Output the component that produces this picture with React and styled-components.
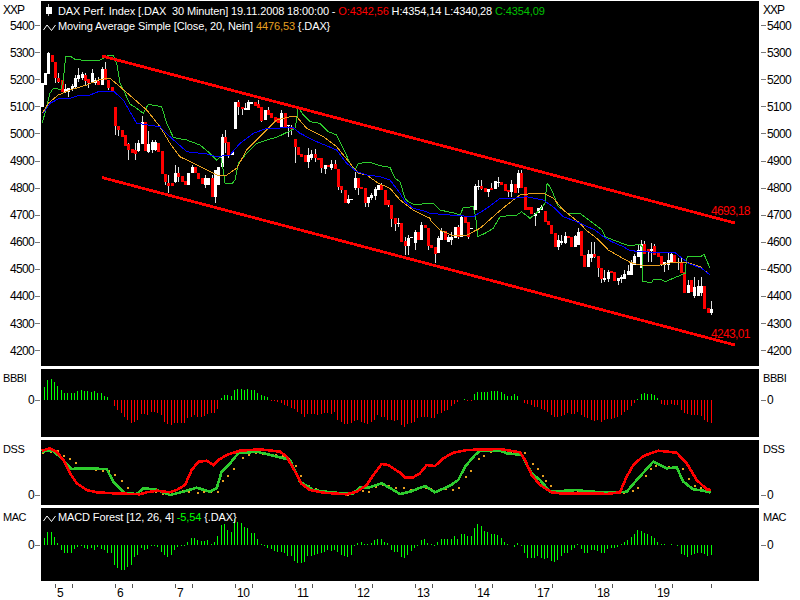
import styled, { createGlobalStyle } from 'styled-components';

const GlobalStyle = createGlobalStyle`
  html, body { margin: 0; padding: 0; background: #fff; }
  body { font-family: "Liberation Sans", Arial, sans-serif; font-size: 12px; color: #000; }
`;

const Page = styled.div`
  width: 800px;
  height: 600px;
  padding-top: 1px;
  box-sizing: border-box;
  display: flex;
  flex-direction: column;
  gap: 3px;
  overflow: hidden;
`;

const ChartRow = styled.div`
  display: grid;
  grid-template-columns: 41px 718px 41px;
  height: ${(p) => p.$h}px;
`;

const Panel = styled.div`
  position: relative;
  background: #000;
  overflow: hidden;
  svg { display: block; }
`;

const AxisCol = styled.div`
  display: flex;
  flex-direction: column;
  align-items: ${(p) => (p.$right ? 'flex-start' : 'flex-end')};
`;

const AxisTitle = styled.div`
  height: ${(p) => p.$h || 16}px;
  line-height: 18px;
  font-size: ${(p) => p.$fs || 11}px;
  letter-spacing: ${(p) => p.$ls || '-0.45px'};
  align-self: flex-start;
  padding-left: ${(p) => (p.$right ? 4 : 3)}px;
  white-space: nowrap;
`;

const TickRow = styled.div`
  height: ${(p) => p.$h}px;
  margin-top: ${(p) => p.$mt || 0}px;
  display: flex;
  flex-direction: ${(p) => (p.$right ? 'row-reverse' : 'row')};
  align-items: center;
  gap: 1px;
  line-height: 14px;
  letter-spacing: -0.67px;
`;

const TickMark = styled.span`
  width: 5px;
  height: 1px;
  background: #777;
  margin: ${(p) => (p.$right ? '0 0 0 2px' : '0 1px 0 0')};
`;

const XAxis = styled.div`
  display: flex;
  margin-top: -3px;
  padding-left: 55px;
  height: 19px;
`;

const DayCell = styled.div`
  position: relative;
  width: 60px;
  flex: none;
  padding: 5px 0 0 2px;
  box-sizing: border-box;
  line-height: 15px;
  letter-spacing: -0.5px;
  &::before, &::after {
    content: '';
    position: absolute;
    top: 3px;
    width: 1px;
    height: 4px;
    background: #555;
  }
  &::before { left: 0; }
  &::after { left: 17px; }
`;

const LastTick = styled.div`
  width: 1px;
  height: 4px;
  margin-top: 3px;
  background: #555;
  margin-left: -4px;
`;

const Legend = styled.div`
  position: absolute;
  left: 2px;
  top: ${(p) => p.$top}px;
  display: flex;
  flex-direction: column;
  color: #fff;
`;

const LegendRow = styled.div`
  height: 15px;
  display: flex;
  align-items: center;
  gap: 2px;
  white-space: pre;
  line-height: 15px;
`;

const IconBox = styled.span`
  width: 13px;
  height: 15px;
  flex: none;
  svg { display: block; }
`;

const LegendText = styled.span`
  font-size: 11px;
  letter-spacing: -0.12px;
`;

const Val = styled.span`
  color: ${(p) => p.$c};
`;

const PriceTag = styled.span`
  position: absolute;
  left: 670px;
  top: ${(p) => p.$top}px;
  color: #f00;
  line-height: 14px;
  letter-spacing: -0.67px;
`;

const seg = (ox, oy, pts) => pts.map(([x, y]) => [ox + x / 3, oy + y / 3]);
const toStr = (pts) => pts.map(([x, y]) => `${x.toFixed(1)},${y.toFixed(1)}`).join(' ');

// [bodyTop, bodyBottom, wickTop, wickBottom, red]
const candles = [
  [83,107,83,107,0],[73,85,73,85,0],[53,74,52,74,0],[55,62,55,62,1],[62,78,62,83,1],[78,82,73,83,1],[80,92,80,92,1],[89,92,84,93,0],[88,92,88,97,0],[86,89,84,91,0],
  [78,87,75,88,0],[75,79,68,82,0],[74,78,72,80,0],[75,81,73,85,1],[79,83,79,88,1],[73,83,69,83,0],[80,83,78,85,0],[81,85,77,85,1],[69,85,67,85,0],[69,80,62,80,1],
  [80,88,80,90,1],[87,91,87,91,1],[107,126,107,135,1],[126,130,126,136,1],[130,137,130,137,1],[135,146,135,146,1],[144,150,143,160,1],[149,153,149,153,1],[150,154,143,160,1],[143,151,140,152,0],
  [122,144,116,144,0],[122,151,122,151,1],[144,152,131,153,0],[142,150,140,153,0],[142,150,140,151,0],[143,152,143,152,1],[151,174,151,174,1],[174,182,174,185,1],[183,186,175,193,1],[183,186,183,186,1],
  [173,182,165,183,0],[173,177,167,182,1],[176,182,176,182,1],[181,185,181,185,1],[173,185,173,185,0],[167,173,165,173,0],[167,173,167,173,1],[173,179,173,179,1],[178,184,178,184,1],[178,185,175,188,0],
  [178,185,178,185,0],[178,197,175,197,1],[170,197,170,203,0],[167,185,167,185,0],[137,167,134,167,0],[137,143,130,153,1],[142,155,142,158,1],[152,155,152,155,0],[102,129,102,129,0],[102,107,100,115,1],
  [107,109,107,115,1],[108,110,103,110,0],[102,110,100,110,0],[102,104,102,104,0],[102,106,102,106,1],[104,108,100,108,1],[107,121,107,122,1],[110,120,110,120,0],[110,115,107,115,1],[113,118,113,118,1],
  [117,122,117,122,1],[118,123,118,123,1],[113,128,110,128,0],[113,127,113,127,1],[125,126,125,137,0],[127,129,125,135,1],[139,147,139,163,1],[147,155,147,155,1],[154,157,154,157,1],[155,162,155,162,1],
  [155,162,148,168,0],[154,158,150,160,0],[154,158,149,162,1],[158,160,158,160,1],[158,168,158,173,1],[165,169,165,174,0],[165,167,165,167,1],[164,168,160,170,0],[164,169,160,169,1],[169,187,169,190,1],
  [186,190,186,193,1],[190,203,190,203,1],[199,203,195,204,0],[199,200,199,200,0],[178,188,172,190,0],[178,188,178,195,1],[187,189,187,189,1],[188,203,188,207,1],[197,203,197,207,0],[195,198,193,200,0],
  [189,196,187,200,0],[185,190,185,190,0],[185,190,183,190,1],[190,205,190,205,1],[200,205,200,207,1],[205,219,205,227,1],[218,224,218,231,1],[223,224,218,227,0],[223,242,223,242,1],[241,246,237,255,1],
  [238,246,235,255,0],[237,238,237,238,0],[232,243,230,250,0],[232,240,232,240,1],[225,240,222,240,0],[225,228,225,228,1],[228,246,228,250,1],[245,248,245,248,1],[247,254,247,263,1],[238,253,236,253,0],
  [231,240,228,240,0],[231,240,231,240,1],[237,242,235,242,0],[237,240,232,245,0],[227,238,227,238,0],[227,237,225,239,1],[217,237,215,237,0],[217,223,217,223,1],[222,237,222,239,1],[228,229,228,229,0],
  [186,210,184,210,0],[186,187,180,190,0],[186,189,180,190,1],[188,192,188,192,1],[189,192,189,197,0],[188,190,183,190,1],[181,189,181,189,0],[182,183,177,187,0],[182,185,182,185,1],[184,191,184,191,1],
  [190,192,190,197,1],[184,192,180,197,0],[184,193,184,193,1],[173,188,170,193,0],[173,188,170,188,1],[187,210,187,210,1],[207,210,207,210,1],[207,214,207,214,1],[213,216,213,226,0],[208,213,208,213,0],
  [207,210,205,210,0],[211,222,211,222,1],[221,225,221,225,1],[225,234,225,234,1],[233,247,233,247,1],[240,247,235,250,0],[241,243,235,245,0],[236,243,232,244,0],[236,238,236,238,1],[237,247,237,247,1],
  [236,247,235,247,0],[232,245,228,245,0],[231,256,231,256,1],[255,267,255,267,1],[254,267,250,267,0],[254,258,242,262,0],[254,257,242,258,1],[256,268,256,277,1],[268,279,268,283,1],[278,280,270,282,0],
  [272,279,270,282,0],[271,273,271,273,1],[272,281,272,281,1],[278,281,278,285,0],[277,279,275,283,0],[274,279,270,279,0],[271,275,265,275,0],[263,275,260,275,0],[256,265,254,265,0],[250,257,245,257,0],
  [244,268,240,268,0],[244,254,241,254,1],[249,252,249,262,1],[249,251,243,262,0],[246,255,244,255,1],[253,257,253,257,1],[256,264,256,266,1],[262,265,262,272,0],[260,265,253,270,0],[254,262,252,262,0],
  [255,262,255,262,1],[262,263,258,270,0],[263,273,258,273,1],[272,293,272,293,1],[285,293,280,293,0],[280,292,280,292,1],[287,296,277,298,0],[286,296,280,296,0],[286,293,277,296,0],[286,309,286,309,1],
  [308,313,308,313,1],[309,313,301,315,0],
];

const greenLine = [
  ...seg(0, 0, [[127,368],[140,320],[150,280],[160,265],[170,265],[182,270],[190,240],[197,170],[210,168],[225,178],[260,182],[295,182],[310,175],[325,165],[340,165],[350,190],[360,250],[375,280],[390,312],[410,325],[430,340],[445,313],[485,320],[500,370],[520,412],[530,415],[560,420],[600,435],[630,460],[650,480],[662,470],[668,500],[675,550],[695,552],[705,540],[715,490],[740,460],[770,430],[800,420],[830,412],[865,395],[885,385],[890,360],[895,322],[910,345],[930,365],[960,370],[985,395],[1010,405],[1030,445],[1050,490],[1065,510],[1075,490],[1110,487]]),
  ...seg(290, 130, [[270,107],[300,112],[315,145],[330,155],[345,205],[355,215],[375,225],[395,222],[430,220]]),
  ...seg(430, 160, [[15,135],[30,150],[75,160],[90,165],[100,143],[130,140],[137,170],[143,230],[165,220],[190,205],[210,170],[235,167],[260,165],[275,155],[300,175],[330,150],[345,130],[350,75],[353,70],[365,90],[385,140],[400,150],[415,162],[450,160]]),
  ...seg(570, 230, [[97,0],[105,20],[130,30],[170,45],[195,45],[208,42],[217,50],[219,155],[245,157],[250,148],[275,150],[285,155],[310,145],[345,130],[345,120],[352,80],[395,78],[402,72],[420,115]]),
];

const blueLine = [
  ...seg(0, 0, [[130,340],[150,310],[175,297],[210,295],[240,285],[270,285],[300,273],[340,273],[370,300],[410,370],[480,380],[510,410],[560,455],[620,462],[650,470],[690,465],[720,430],[760,400],[800,385],[880,383],[900,400],[950,425],[1010,450],[1040,490],[1070,515],[1100,525]]),
  ...seg(290, 130, [[270,140],[300,150],[330,190],[345,215],[370,235],[410,245]]),
  ...seg(430, 160, [[0,160],[60,165],[130,170],[170,145],[210,115],[250,115],[290,110],[340,120],[375,145],[400,170],[440,185]]),
  ...seg(570, 230, [[75,0],[100,20],[125,35],[160,50],[180,62],[250,67],[315,68],[350,95],[355,100],[395,115],[420,135]]),
];

const orangeLine = [
  ...seg(0, 0, [[127,340],[145,310],[175,285],[210,270],[260,255],[300,238],[330,235],[360,260],[400,295],[440,330],[480,380],[510,430],[540,470],[580,490],[620,510],[650,525],[680,525],[710,505],[740,450],[780,410],[830,360],[870,350],[890,350],[920,385],[970,410],[1010,440],[1050,490],[1075,520]]),
  ...seg(290, 130, [[230,135],[265,160],[300,175],[330,210],[370,240],[420,265]]),
  ...seg(430, 160, [[0,180],[30,210],[70,228],[110,225],[150,205],[195,165],[230,135],[270,105],[310,100],[340,100],[370,115],[400,150],[450,190]]),
  ...seg(570, 230, [[48,0],[80,25],[115,60],[150,80],[180,97],[220,108],[270,105],[310,97],[350,97],[390,110],[420,135]]),
];

const bbbi = [
  13,20,21,18,14,10,7,7,7,7,9,10,9,9,8,9,7,7,4,3,0,-6,-10,-13,-17,-20,-23,-22,-20,-14,-14,-15,-12,-12,-13,-15,-22,-24,-25,-23,-23,-23,-23,-18,-17,-15,-17,-17,-16,-14,-13,-13,-9,2,5,5,4,10,11,11,10,11,10,10,7,5,4,3,-1,-1,-2,-3,-5,-6,-8,-9,-12,-14,-17,-14,-14,-14,-15,-14,-13,-13,-14,-12,-20,-22,-24,-24,-23,-21,-20,-22,-23,-24,-22,-20,-15,-17,-17,-20,-20,-21,-20,
  -25,-27,-24,-23,-22,-18,-17,-17,-17,-18,-18,-14,-13,-11,-10,-6,-4,-2,0,1,-1,-1,6,8,8,8,8,9,9,9,8,6,4,4,6,4,0,-3,-4,-5,-7,-7,-9,-10,-12,-15,-17,-17,-16,-15,-13,-14,-14,-12,-15,-17,-18,-20,-21,-20,-22,-20,-19,-19,-18,-17,-15,-12,-10,-6,-3,1,6,7,6,6,5,2,-4,-5,-5,-4,-5,-5,-10,-13,-14,-15,-15,-15,-16,-20,-22,-23,
];

const macd = [
  7,13,13,8,2,-5,-8,-8,-8,-4,-2,-1,-3,-4,-3,-5,-2,-4,-5,-8,-8,-20,-23,-25,-25,-22,-20,-12,-10,-3,-5,-4,-1,-1,-2,-7,-10,-12,-10,-5,-2,-1,-1,3,7,7,5,4,4,5,1,3,9,20,21,15,13,26,23,22,18,17,12,12,6,1,-1,-3,-4,-6,-7,-7,-8,-11,-11,-16,-18,-18,-17,-11,-11,-10,-9,-8,-7,-5,-6,-5,-7,-10,-11,-12,-10,-1,2,3,1,1,2,5,6,6,3,2,-5,-7,-7,
  -12,-13,-10,-6,-3,-1,5,6,2,1,-1,3,6,6,6,6,9,6,11,11,9,9,17,21,19,14,13,11,11,10,7,3,1,0,-2,2,-1,-8,-13,-13,-13,-11,-13,-14,-13,-16,-17,-15,-11,-8,-8,-5,-3,1,-4,-8,-8,-5,-5,-6,-8,-8,-4,-3,-3,-2,1,3,5,8,11,15,14,12,11,9,7,3,1,1,0,1,0,-1,-9,-10,-12,-10,-9,-8,-8,-9,-11,-10,
];

const dssRed = [
  ...seg(0, 360, [[125,272],[150,265],[170,275],[190,300],[210,340],[230,370],[260,390],[290,397],[340,400],[420,403],[440,397],[470,392],[510,397],[530,390],[555,375],[575,330],[595,305],[620,302],[640,315],[655,300],[680,285],[720,272],[780,268],[840,275],[860,290],[880,325],[905,372],[930,390],[970,398],[1040,403],[1070,395],[1100,375],[1120,345],[1145,312],[1165,315]]),
  ...seg(400, 360, [[0,338],[15,352],[40,352],[60,340],[80,315],[105,318],[130,295],[160,278],[200,270],[300,267],[360,277],[375,300],[395,345],[420,375],[455,397],[480,400],[590,400],[620,402],[660,397],[680,350],[700,315],[730,288],[775,272],[830,278],[860,310],[890,360],[920,388],[932,390]]),
];

const dssGreen = [
  ...seg(0, 360, [[125,275],[155,270],[180,290],[215,327],[240,325],[320,327],[340,365],[375,400],[410,402],[430,385],[465,388],[510,405],[550,395],[590,383],[630,395],[650,385],[665,335],[690,310],[715,280],[770,275],[820,287],[870,300],[900,365],[940,390],[1000,398],[1060,400],[1080,382],[1110,382],[1145,370],[1180,390]]),
  ...seg(400, 360, [[0,402],[30,395],[75,378],[105,397],[150,377],[175,360],[195,320],[225,285],[240,272],[300,272],[320,280],[365,285],[395,340],[420,360],[450,395],[530,390],[570,395],[660,397],[680,395],[710,360],[760,305],[800,325],[830,322],[850,365],[880,388],[910,392],[932,398]]),
];

const dssDots = [
  ...seg(0, 360, [[125,275],[150,272],[170,270],[190,285],[207,295],[225,307],[245,320],[265,325],[285,327],[305,330],[325,330],[342,342],[362,360],[382,380],[402,400],[425,400],[445,392],[465,392],[485,398],[505,400],[525,398],[545,390],[565,393],[590,397],[610,392],[630,392],[650,392],[665,360],[680,345],[700,325],[725,292],[745,282],[765,275],[785,278],[805,280],[825,283],[845,285],[865,295],[885,315],[900,345],[925,375],[945,385],[1000,400],[1040,402],[1060,397],[1085,390],[1105,392],[1125,378],[1145,372],[1165,375],[1185,380]]),
  ...seg(400, 360, [[10,382],[30,387],[50,385],[75,382],[90,385],[115,387],[135,385],[155,388],[175,380],[195,347],[210,330],[235,295],[250,285],[270,272],[310,270],[330,272],[350,272],[372,277],[395,310],[410,325],[425,345],[435,360],[450,375],[465,390],[485,395],[510,395],[530,392],[550,395],[570,392],[590,392],[610,392],[630,397],[650,397],[670,397],[695,390],[710,380],[735,345],[750,325],[765,315],[785,318],[805,318],[825,320],[845,325],[865,355],[882,375],[900,380],[915,392]]),
];

const priceTicks = [5400, 5300, 5200, 5100, 5000, 4900, 4800, 4700, 4600, 4500, 4400, 4300, 4200];
const days = ['5', '6', '7', '10', '11', '12', '13', '14', '17', '18', '19'];

const barX = (i) => Math.round(44 + i * 3.333);

const Candles = () => (
  <>
    {candles.map(([top, bottom, wTop, wBottom, red], i) => {
      const x = Math.round(41.7 + i * 3.33);
      return (
        <g key={i}>
          <rect x={x} y={wTop} width="1" height={wBottom - wTop} fill="#ddd" />
          <rect x={x - 1} y={top} width="3" height={Math.max(bottom - top, 1)} fill={red ? '#f00' : '#fff'} />
        </g>
      );
    })}
  </>
);

const Histogram = ({ data, zero, up, down }) => (
  <>
    {data.map((v, i) => (
      <rect
        key={i}
        x={barX(i)}
        y={v > 0 ? zero - v : zero}
        width="1"
        height={Math.abs(v)}
        fill={v > 0 ? up : down}
      />
    ))}
  </>
);

const ChartSvg = ({ top, h, children }) => (
  <svg width="718" height={h} viewBox={`41 ${top} 718 ${h}`} shapeRendering="crispEdges">
    {children}
  </svg>
);

const WaveIcon = () => (
  <IconBox>
    <svg width="13" height="15" viewBox="0 0 13 15">
      <path d="M0.5 11 L4 6 L6.5 9 L8.5 11.5 L12.5 6" fill="none" stroke="#fff" strokeWidth="1" />
    </svg>
  </IconBox>
);

const CandleIcon = () => (
  <IconBox>
    <svg width="13" height="15" viewBox="0 0 13 15" shapeRendering="crispEdges">
      <rect x="5" y="0" width="1" height="12" fill="#bbb" />
      <rect x="3" y="3" width="6" height="7" fill="#fff" />
    </svg>
  </IconBox>
);

const App = () => (
  <>
    <GlobalStyle />
    <Page>
      <ChartRow $h={365}>
        <AxisCol>
          <AxisTitle $h={11} $fs={12} $ls="-1px">XXP</AxisTitle>
          {priceTicks.map((t) => (
            <TickRow key={t} $h={27.1}>{t}<TickMark /></TickRow>
          ))}
        </AxisCol>
        <Panel>
          <ChartSvg top={1} h={365}>
            <Candles />
            <polyline points={toStr(greenLine)} fill="none" stroke="#2ecc2e" strokeWidth="1" />
            <polyline points={toStr(orangeLine)} fill="none" stroke="#e8a020" strokeWidth="1" />
            <polyline points={toStr(blueLine)} fill="none" stroke="#0000ff" strokeWidth="1" />
            <line x1="102" y1="56" x2="735" y2="223" stroke="#f00" strokeWidth="2.8" />
            <line x1="102" y1="177.5" x2="735" y2="345" stroke="#f00" strokeWidth="2.8" />
          </ChartSvg>
          <Legend $top={3}>
            <LegendRow>
              <CandleIcon />
              <LegendText>
                {'DAX Perf. Index [.DAX  30 Minuten] 19.11.2008 18:00:00 - '}
                <Val $c="#f00">O:4342,56</Val>{' H:4354,14 L:4340,28 '}
                <Val $c="#00c000">C:4354,09</Val>
              </LegendText>
            </LegendRow>
            <LegendRow>
              <WaveIcon />
              <LegendText>
                {'Moving Average Simple [Close, 20, Nein] '}
                <Val $c="#e8a020">4476,53</Val>{' {.DAX}'}
              </LegendText>
            </LegendRow>
          </Legend>
          <PriceTag $top={203}>4693,18</PriceTag>
          <PriceTag $top={326}>4243,01</PriceTag>
        </Panel>
        <AxisCol $right>
          <AxisTitle $h={11} $fs={12} $ls="-1px" $right>XXP</AxisTitle>
          {priceTicks.map((t) => (
            <TickRow key={t} $h={27.1} $right>{t}<TickMark $right /></TickRow>
          ))}
        </AxisCol>
      </ChartRow>

      <ChartRow $h={68}>
        <AxisCol>
          <AxisTitle>BBBI</AxisTitle>
          <TickRow $h={14} $mt={8}>0<TickMark /></TickRow>
        </AxisCol>
        <Panel>
          <ChartSvg top={369} h={68}>
            <Histogram data={bbbi} zero={400} up="#00ff00" down="#f00" />
          </ChartSvg>
        </Panel>
        <AxisCol $right>
          <AxisTitle $right>BBBI</AxisTitle>
          <TickRow $h={14} $mt={8} $right>0<TickMark $right /></TickRow>
        </AxisCol>
      </ChartRow>

      <ChartRow $h={65}>
        <AxisCol>
          <AxisTitle>DSS</AxisTitle>
          <TickRow $h={14} $mt={32}>0<TickMark /></TickRow>
        </AxisCol>
        <Panel>
          <ChartSvg top={440} h={65}>
            {dssDots.map(([x, y], i) => (
              <rect key={i} x={Math.round(x)} y={Math.round(y)} width="2" height="2" fill="#e8a020" />
            ))}
            <polyline points={toStr(dssGreen)} fill="none" stroke="#2ecc2e" strokeWidth="2.6" />
            <polyline points={toStr(dssRed)} fill="none" stroke="#f00" strokeWidth="2.6" />
          </ChartSvg>
        </Panel>
        <AxisCol $right>
          <AxisTitle $right>DSS</AxisTitle>
          <TickRow $h={14} $mt={32} $right>0<TickMark $right /></TickRow>
        </AxisCol>
      </ChartRow>

      <ChartRow $h={73}>
        <AxisCol>
          <AxisTitle>MAC</AxisTitle>
          <TickRow $h={14} $mt={14}>0<TickMark /></TickRow>
        </AxisCol>
        <Panel>
          <ChartSvg top={508} h={73}>
            <Histogram data={macd} zero={545} up="#00ff00" down="#00ff00" />
          </ChartSvg>
          <Legend $top={2}>
            <LegendRow>
              <WaveIcon />
              <LegendText>
                {'MACD Forest [12, 26, 4] '}
                <Val $c="#00ff00">-5,54</Val>{' {.DAX}'}
              </LegendText>
            </LegendRow>
          </Legend>
        </Panel>
        <AxisCol $right>
          <AxisTitle $right>MAC</AxisTitle>
          <TickRow $h={14} $mt={14} $right>0<TickMark $right /></TickRow>
        </AxisCol>
      </ChartRow>

      <XAxis>
        {days.map((d) => (
          <DayCell key={d}>{d}</DayCell>
        ))}
        <LastTick />
      </XAxis>
    </Page>
  </>
);

export default App;
